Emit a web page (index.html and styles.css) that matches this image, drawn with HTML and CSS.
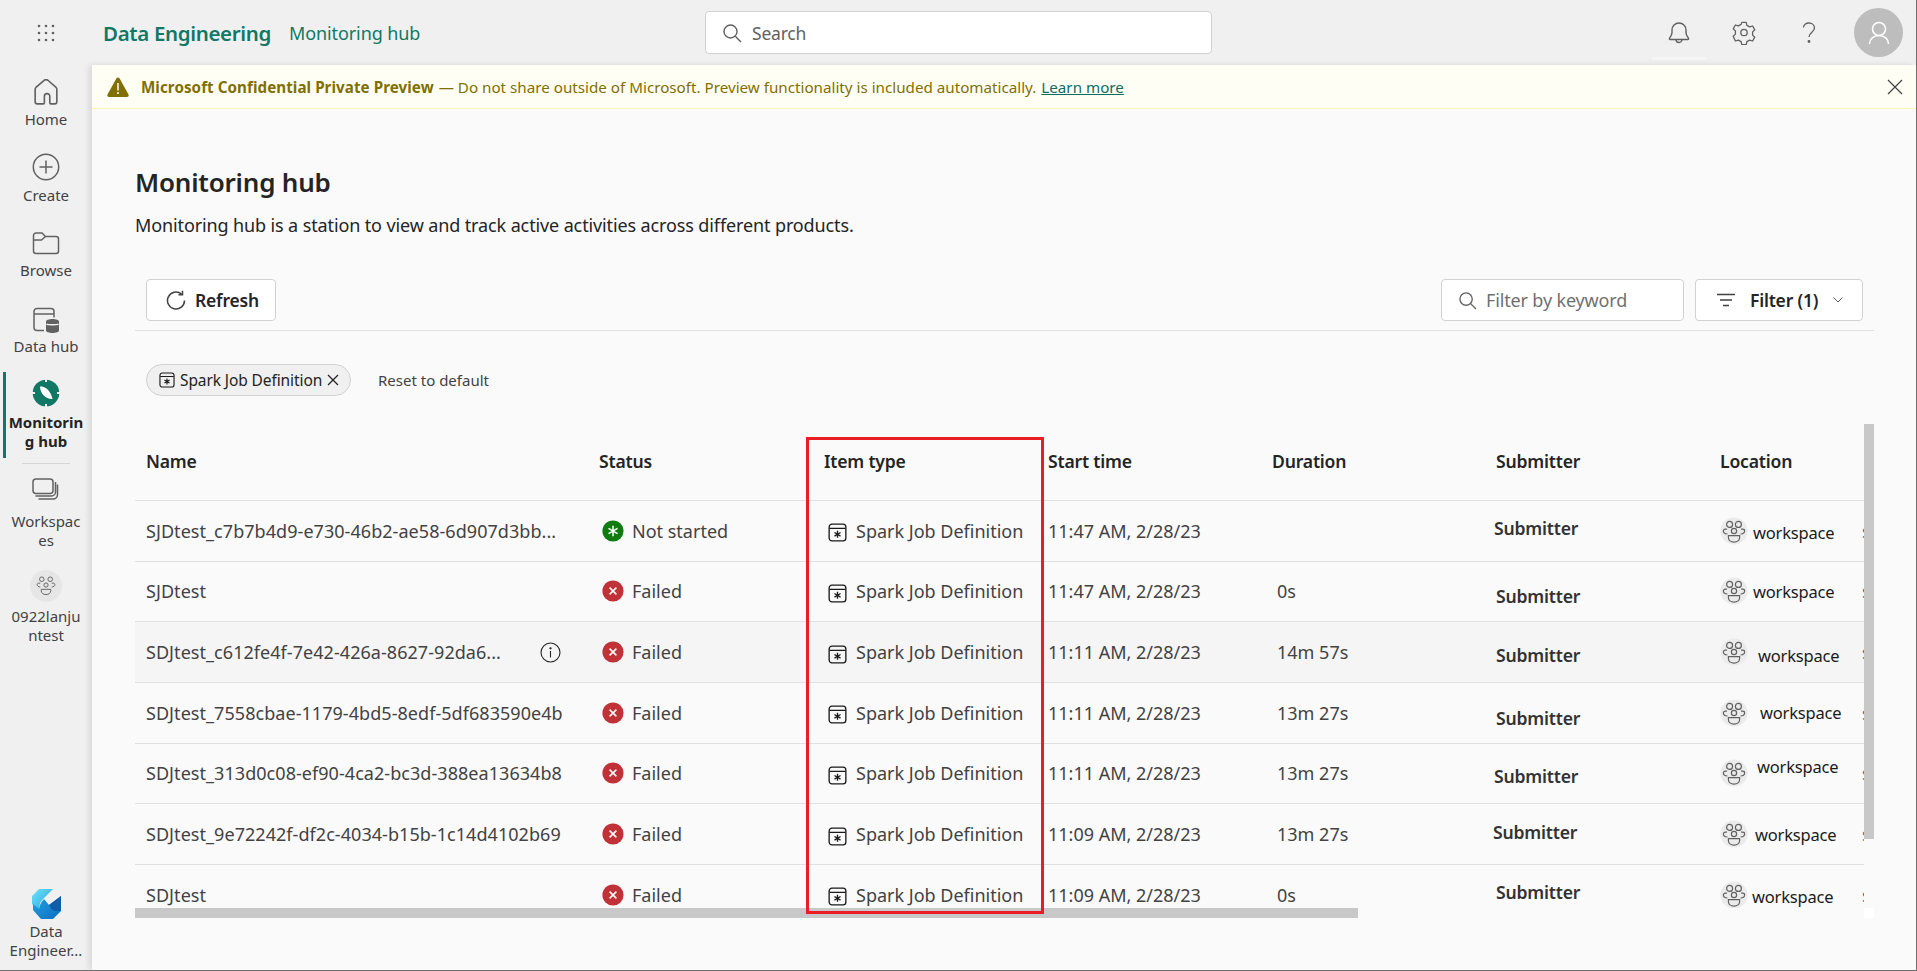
FILE: index.html
```html
<!DOCTYPE html>
<html lang="en">
<head>
<meta charset="utf-8">
<title>Monitoring hub</title>
<link rel="stylesheet" href="styles.css">
</head>
<body>
<svg class="defs" width="0" height="0" aria-hidden="true">
  <defs>
    <symbol id="sjd" viewBox="0 0 20 20"><rect x="1.2" y="1.2" width="17.6" height="17.6" rx="3" fill="none" stroke="#1a1a1a" stroke-width="1.4"/><path d="M1.5 5.6h17M10 8.2v7.4M6.8 10l6.4 3.8M13.2 10l-6.4 3.8" fill="none" stroke="#1a1a1a" stroke-width="1.4"/></symbol>
    <symbol id="fail" viewBox="0 0 22 22"><circle cx="11" cy="11" r="10.6" fill="#c13238"/><path d="M7.6 7.6l6.8 6.8M14.4 7.6l-6.8 6.8" stroke="#fff" stroke-width="1.5" fill="none"/></symbol>
    <symbol id="team" viewBox="0 0 28 28"><circle cx="14" cy="14" r="13.6" fill="#ebebeb"/><g fill="none" stroke="#616161" stroke-width="1.2"><circle cx="9.6" cy="7.4" r="3"/><circle cx="18.4" cy="7.4" r="3"/><circle cx="14" cy="14" r="2.6"/><path d="M7 12.2H5.4c-1.2 0-2 .8-2 1.8 0 1.5 1.6 2.8 4 3M21 12.2h1.6c1.2 0 2 .8 2 1.8 0 1.500-1.600 2.800-4 3M8.400 18.600h11.200v2c0 2.600-2.400 4.600-5.600 4.600s-5.600-2-5.600-4.600z"/></g></symbol>
  </defs>
</svg>
<header class="topbar">
  <div class="waffle">
    <svg width="18" height="18" viewBox="0 0 18 18" fill="#616161"><circle cx="2" cy="2" r="1.300"/><circle cx="9" cy="2" r="1.300"/><circle cx="16" cy="2" r="1.300"/><circle cx="2" cy="9" r="1.300"/><circle cx="9" cy="9" r="1.300"/><circle cx="16" cy="9" r="1.300"/><circle cx="2" cy="16" r="1.300"/><circle cx="9" cy="16" r="1.300"/><circle cx="16" cy="16" r="1.300"/></svg>
  </div>
  <div class="brand">Data Engineering</div>
  <div class="crumb">Monitoring hub</div>
  <div class="search">
    <svg width="20" height="20" viewBox="0 0 20 20" fill="none" stroke="#616161" stroke-width="1.400"><circle cx="8.500" cy="8.500" r="6.500"/><path d="M13.300 13.300l5.700 5.700"/></svg>
    <span>Search</span>
  </div>
  <div class="top-icons">
    <div class="top-icon bell">
      <svg width="22" height="24" viewBox="0 0 22 24" fill="none" stroke="#616161" stroke-width="1.400"><path d="M4 11.500V9a7 7 0 0 1 14 0v2.500c0 2.500 1.500 4.200 2.500 5.800.4.700 0 1.200-.7 1.200H2.200c-.7 0-1.100-.5-.7-1.200 1-1.600 2.500-3.300 2.500-5.800zM8 18.500a3 3 0 0 0 6 0"/></svg>
    </div>
    <div class="top-icon">
      <svg width="24" height="24" viewBox="0 0 24 24" fill="none" stroke="#616161" stroke-width="1.300"><path d="M9.800 1.400h4.400l.7 3 2.700 1.500 3-.9 2.200 3.800-2.200 2.100v3.200l2.200 2.100-2.200 3.800-3-.9-2.700 1.500-.7 3H9.800l-.7-3-2.700-1.500-3 .9L1.200 15.200l2.200-2.100V9.900L1.200 7.800 3.400 4l3 .9 2.700-1.500z" stroke-linejoin="round"/><circle cx="12" cy="11.500" r="3.200"/></svg>
    </div>
    <div class="top-icon">
      <svg width="14" height="22" viewBox="0 0 14 22" fill="none" stroke="#616161" stroke-width="1.300"><path d="M1.500 5.500C1.500 3 4 1 7 1s5.500 2 5.500 5c0 4-5.500 4.500-5.500 9"/><circle cx="7" cy="19.500" r=".8" fill="#616161"/></svg>
    </div>
  </div>
  <div class="me">
    <svg width="24" height="24" viewBox="0 0 24 24" fill="none" stroke="#fff" stroke-width="1.500"><circle cx="12" cy="8" r="6.500"/><path d="M2.500 23c0-5 4-8.500 9.500-8.500s9.500 3.500 9.500 8.500"/></svg>
  </div>
</header>
<div class="shell">
  <nav class="side">
    <a class="nav n-home">
      <svg width="24" height="26" viewBox="1 1 22 24" fill="none" stroke="#616161" stroke-width="1.500"><path d="M10 2.400a3 3 0 0 1 4 0l7.300 6.400c.5.500.7 1 .7 1.700V22a2 2 0 0 1-2 2h-3.500a1 1 0 0 1-1-1v-6a2.500 2.500 0 0 0-5 0v6a1 1 0 0 1-1 1H4a2 2 0 0 1-2-2V10.500c0-.7.200-1.200.7-1.700z"/></svg>
      <span>Home</span>
    </a>
    <a class="nav n-create">
      <svg width="28" height="28" viewBox="0 0 28 28" fill="none" stroke="#616161" stroke-width="1.500"><circle cx="14" cy="14" r="12.700"/><path d="M14 7.500v13M7.500 14h13"/></svg>
      <span>Create</span>
    </a>
    <a class="nav n-browse">
      <svg width="28" height="24" viewBox="0 0 28 24" fill="none" stroke="#616161" stroke-width="1.500"><path d="M1.500 4.500a2.500 2.500 0 0 1 2.500-2.500h6l3.500 3.500H24a2.500 2.500 0 0 1 2.500 2.500v12a2.500 2.500 0 0 1-2.500 2.500H4a2.500 2.500 0 0 1-2.500-2.500zM1.500 9h8l4-3.500"/></svg>
      <span>Browse</span>
    </a>
    <a class="nav n-data">
      <svg width="28" height="28" viewBox="0 0 28 28" fill="none" stroke="#616161" stroke-width="1.500"><path d="M12 24.500H5a3 3 0 0 1-3-3v-16a3 3 0 0 1 3-3h14a3 3 0 0 1 3 3v6M2 8h20"/><path d="M14 15.500c0-1.500 3-2.500 6.500-2.500s6.500 1 6.500 2.500v9c0 1.500-3 2.500-6.500 2.500s-6.500-1-6.500-2.500z" fill="#616161" stroke="none"/><path d="M14.500 18c1.500 1 10.500 1 12 0" stroke="#f0f0f0"/></svg>
      <span>Data hub</span>
    </a>
    <a class="nav active">
      <svg width="28" height="28" viewBox="0 0 28 28"><circle cx="14" cy="14" r="13.300" fill="#117865"/><path d="M8 7.500c5-1 11 4.500 12.500 12.500C14 20.500 8 14.500 8 7.500z" fill="#fff"/><path d="M13 0h2v3h-2zM13 25h2v3h-2zM0 13h3v2H0zM25 13h3v2h-3z" fill="#f0f0f0"/></svg>
      <span>Monitoring hub</span>
    </a>
    <div class="nav-sep"></div>
    <a class="nav spaces">
      <svg width="28" height="24" viewBox="0 0 28 24" fill="none" stroke="#616161" stroke-width="1.500"><rect x="1" y="1" width="20" height="14.500" rx="3"/><path d="M3.500 18h16a4 4 0 0 0 4-4V4M6.500 21h14.500a4.500 4.500 0 0 0 4.500-4.500V6.500" /></svg>
      <span>Workspaces</span>
    </a>
    <a class="nav ws">
      <div class="ws-badge"><svg width="20" height="20" viewBox="5 4 18 21"><g fill="none" stroke="#616161" stroke-width="1"><circle cx="9.600" cy="7.400" r="2.400"/><circle cx="18.400" cy="7.400" r="2.400"/><circle cx="14" cy="13.500" r="2.200"/><path d="M8 11.500H6.500c-1.200 0-1.800.8-1.800 1.600 0 1.300 1.400 2.400 3.300 2.500M20 11.500h1.500c1.200 0 1.800.8 1.800 1.600 0 1.300-1.400 2.400-3.300 2.500M9 18h10v1.500c0 2.500-2.200 4-5 4s-5-1.500-5-4z"/></g></svg></div>
      <span>0922lanjuntest</span>
    </a>
    <a class="nav logo">
      <svg width="29" height="30" viewBox="0 0 29 30"><defs><linearGradient id="lg1" x1="0" y1="0" x2="1" y2="1"><stop offset="0" stop-color="#6fe3f8"/><stop offset="1" stop-color="#1f9fe0"/></linearGradient><linearGradient id="lg2" x1="0" y1="0" x2="1" y2="1"><stop offset="0" stop-color="#22a5e6"/><stop offset="1" stop-color="#0f6cbd"/></linearGradient></defs><path d="M7 0h14L10 11Q6 16 8 22L0 15V7z" fill="url(#lg1)"/><path d="M12 10l5 6L29 7v15l-8 8H9l-8-9v-6l6 5q1-6 5-10z" fill="url(#lg2)"/><path d="M17 16L29 7v15h-7q-3-2-5-6z" fill="#0f5ea8"/></svg>
      <span>Data Engineer...</span>
    </a>
  </nav>
  <main class="main">
    <div class="banner">
      <svg class="warn" width="22" height="20" viewBox="0 0 22 20"><path d="M9.500 1.300a1.700 1.700 0 0 1 3 0l9 16.200c.6 1.100-.2 2.500-1.500 2.500H2c-1.300 0-2.100-1.400-1.500-2.500z" fill="#7f7000"/><path d="M11 6v7.500" stroke="#fffef5" stroke-width="1.500"/><circle cx="11" cy="16" r="1" fill="#fffef5"/></svg>
      <strong>Microsoft Confidential Private Preview</strong>
      <span class="b-text">— Do not share outside of Microsoft. Preview functionality is included automatically.</span>
      <a class="b-link">Learn more</a>
      <svg class="b-close" width="16" height="16" viewBox="0 0 16 16" stroke="#424242" stroke-width="1.200"><path d="M1 1l14 14M15 1L1 15"/></svg>
    </div>
    <section class="page">
      <h1>Monitoring hub</h1>
      <p class="lead">Monitoring hub is a station to view and track active activities across different products.</p>
      <div class="toolbar">
        <button class="btn refresh">
          <svg width="21" height="21" viewBox="0 0 21 21" fill="none" stroke="#424242" stroke-width="1.500"><path d="M18.500 10.500a8.500 8.500 0 1 1-3.200-6.600M16.500 .8v4h-4"/></svg>
          <span>Refresh</span>
        </button>
        <div class="kw">
          <svg width="19" height="19" viewBox="0 0 20 20" fill="none" stroke="#616161" stroke-width="1.400"><circle cx="8.500" cy="8.500" r="6.500"/><path d="M13.300 13.300l5.700 5.700"/></svg>
          <span>Filter by keyword</span>
        </div>
        <button class="btn filter">
          <svg width="20" height="14" viewBox="0 0 20 14" stroke="#424242" stroke-width="1.400"><path d="M1 1.500h18M4 7h12M7 12.500h6"/></svg>
          <span>Filter (1)</span>
          <svg class="chev" width="10" height="6" viewBox="0 0 10 6" fill="none" stroke="#616161" stroke-width="1"><path d="M.5.500L5 5 9.500.5"/></svg>
        </button>
      </div>
      <div class="chips">
        <div class="chip">
          <svg class="ic-chip"><use href="#sjd"/></svg>
          <span>Spark Job Definition</span>
          <svg width="12" height="12" viewBox="0 0 12 12" stroke="#242424" stroke-width="1.300"><path d="M1 1l10 10M11 1L1 11"/></svg>
        </div>
        <a class="reset">Reset to default</a>
      </div>
      <div class="table-wrap">
        <div class="table">
          <div class="row head">
            <div>Name</div><div>Status</div><div>Item type</div><div>Start time</div><div>Duration</div><div>Submitter</div><div>Location</div>
          </div>
          <div class="row">
            <div class="name">SJDtest_c7b7b4d9-e730-46b2-ae58-6d907d3bb...</div>
            <div class="status"><svg class="ic-st" viewBox="0 0 22 22"><circle cx="11" cy="11" r="10.600" fill="#107c10"/><path d="M11 5.800v10.400M6.500 8.400l9 5.200M15.500 8.400l-9 5.200" stroke="#fff" stroke-width="1.500"/></svg><span>Not started</span></div>
            <div class="item"><svg class="ic-item n2"><use href="#sjd"/></svg><span>Spark Job Definition</span></div>
            <div>11:47 AM, 2/28/23</div>
            <div class="dur"></div>
            <div class="sub l-2 n-3">Submitter</div>
            <div class="loc"><svg class="ic-ws"><use href="#team"/></svg><span class="w-a t2">workspace</span></div>
          </div>
          <div class="row">
            <div class="name">SJDtest</div>
            <div class="status"><svg class="ic-st"><use href="#fail"/></svg><span>Failed</span></div>
            <div class="item"><svg class="ic-item n2"><use href="#sjd"/></svg><span>Spark Job Definition</span></div>
            <div>11:47 AM, 2/28/23</div>
            <div class="dur">0s</div>
            <div class="sub n5">Submitter</div>
            <div class="loc"><svg class="ic-ws"><use href="#team"/></svg><span class="w-a">workspace</span></div>
          </div>
          <div class="row hover">
            <div class="name split"><span>SDJtest_c612fe4f-7e42-426a-8627-92da6...</span><svg class="info" width="21" height="21" viewBox="0 0 21 21" fill="none" stroke="#242424" stroke-width="1.100"><circle cx="10.500" cy="10.500" r="9.500"/><path d="M10.500 9v6.500"/><circle cx="10.500" cy="6.300" r=".6" fill="#242424"/></svg></div>
            <div class="status"><svg class="ic-st"><use href="#fail"/></svg><span>Failed</span></div>
            <div class="item"><svg class="ic-item n2"><use href="#sjd"/></svg><span>Spark Job Definition</span></div>
            <div>11:11 AM, 2/28/23</div>
            <div class="dur">14m 57s</div>
            <div class="sub n3">Submitter</div>
            <div class="loc"><svg class="ic-ws"><use href="#team"/></svg><span class="w-b t3">workspace</span></div>
          </div>
          <div class="row">
            <div class="name">SDJtest_7558cbae-1179-4bd5-8edf-5df683590e4b</div>
            <div class="status"><svg class="ic-st"><use href="#fail"/></svg><span>Failed</span></div>
            <div class="item"><svg class="ic-item n2"><use href="#sjd"/></svg><span>Spark Job Definition</span></div>
            <div>11:11 AM, 2/28/23</div>
            <div class="dur">13m 27s</div>
            <div class="sub n5">Submitter</div>
            <div class="loc"><svg class="ic-ws"><use href="#team"/></svg><span class="w-c">workspace</span></div>
          </div>
          <div class="row">
            <div class="name">SDJtest_313d0c08-ef90-4ca2-bc3d-388ea13634b8</div>
            <div class="status"><svg class="ic-st"><use href="#fail"/></svg><span>Failed</span></div>
            <div class="item"><svg class="ic-item n2"><use href="#sjd"/></svg><span>Spark Job Definition</span></div>
            <div>11:11 AM, 2/28/23</div>
            <div class="dur">13m 27s</div>
            <div class="sub l-2 n3">Submitter</div>
            <div class="loc"><svg class="ic-ws"><use href="#team"/></svg><span class="w-d t-7">workspace</span></div>
          </div>
          <div class="row">
            <div class="name">SDJtest_9e72242f-df2c-4034-b15b-1c14d4102b69</div>
            <div class="status"><svg class="ic-st"><use href="#fail"/></svg><span>Failed</span></div>
            <div class="item"><svg class="ic-item n2"><use href="#sjd"/></svg><span>Spark Job Definition</span></div>
            <div>11:09 AM, 2/28/23</div>
            <div class="dur">13m 27s</div>
            <div class="sub l-3 n-3">Submitter</div>
            <div class="loc"><svg class="ic-ws"><use href="#team"/></svg><span class="w-e">workspace</span></div>
          </div>
          <div class="row">
            <div class="name">SDJtest</div>
            <div class="status"><svg class="ic-st"><use href="#fail"/></svg><span>Failed</span></div>
            <div class="item"><svg class="ic-item n2"><use href="#sjd"/></svg><span>Spark Job Definition</span></div>
            <div>11:09 AM, 2/28/23</div>
            <div class="dur">0s</div>
            <div class="sub n-3">Submitter</div>
            <div class="loc"><svg class="ic-ws"><use href="#team"/></svg><span class="w-f t2">workspace</span></div>
          </div>
        </div>
        <div class="vbar"></div>
        <div class="hbar"></div>
        <div class="corner"></div>
      </div>
      <div class="redbox"></div>
    </section>
  </main>
</div>
</body>
</html>
```
FILE: styles.css
```css
* { box-sizing: border-box; }
html, body { margin: 0; height: 100%; }
body {
  width: 1917px; height: 971px; overflow: hidden;
  background: #f0f0f0; color: #242424;
  font-family: "Noto Sans", "Open Sans", "Liberation Sans", sans-serif;
  border-right: 1px solid #6e6e6e; border-bottom: 1px solid #6e6e6e;
  display: flex; flex-direction: column;
}
.defs { display: block; height: 0; }
svg { flex: none; display: block; }

.topbar { height: 65px; flex: none; display: flex; align-items: center; position: relative; }
.waffle { width: 103px; padding-left: 37px; }
.brand { font-size: 20.500px; font-weight: 600; color: #117865; letter-spacing: -.35px; width: 186px; }
.crumb { font-size: 18px; color: #117865; letter-spacing: -.1px; width: 416px; }
.search { width: 507px; height: 43px; background: #fff; border: 1px solid #d1d1d1; border-radius: 4px; display: flex; align-items: center; padding-left: 16px; gap: 10px; font-size: 17.500px; color: #616161; letter-spacing: -.2px; }
.top-icons { display: flex; margin-left: 434px; }
.top-icon { width: 65px; height: 54px; display: flex; align-items: center; justify-content: center; margin-top: 0; }
.bell { border-bottom: 3px solid #f5f5f5; width: 54px; margin-right: 5px; margin-left: 6px; height: 54px; padding-top: 3px; }
.me { width: 49px; height: 49px; border-radius: 50%; background: #bdbdbd; display: flex; align-items: center; justify-content: center; margin-left: 13px; }

.shell { flex: 1; display: flex; min-height: 0; }
.side { width: 92px; flex: none; display: flex; flex-direction: column; align-items: center; position: relative; padding-top: 13px; }
.nav { width: 74px; flex: none; display: flex; flex-direction: column; align-items: center; text-align: center; font-size: 15px; line-height: 19px; color: #424242; word-break: break-all; }
.nav span { display: block; }
.n-home { height: 75px; padding-top: 1px; gap: 5px; }
.n-create { height: 78px; gap: 4.500px; }
.n-browse { height: 75px; gap: 6px; }
.n-data { height: 66px; gap: 2.500px; }
.nav.active { height: 86px; width: 86px; align-self: flex-start; margin-left: 3px; padding: 7px 3px 0; font-weight: 700; color: #242424; position: relative; gap: 5.500px; }
.nav.active::before { content: ""; position: absolute; left: 0; top: 0; bottom: 0; width: 3px; background: #117865; }
.nav-sep { width: 48px; height: 1px; background: #d6d6d6; flex: none; margin-top: 5px; }
.nav.spaces { height: 106px; padding-top: 14px; gap: 9.500px; }
.nav.ws { gap: 4.500px; }
.ws-badge { width: 32px; height: 32px; border-radius: 50%; background: #e6e6e6; display: flex; align-items: center; justify-content: center; }
.nav.logo { margin-top: auto; padding-bottom: 10px; gap: 3.500px; word-break: normal; }

.main { flex: 1; min-width: 0; background: #fafafa; box-shadow: -3px 0 6px rgba(0,0,0,.10); display: flex; flex-direction: column; }
.banner { height: 44px; flex: none; background: #fffef5; border-bottom: 1px solid #fff4b0; display: flex; align-items: center; padding-left: 15px; font-size: 15.200px; color: #7f7000; }
.banner strong { margin-left: 12px; font-weight: 700; letter-spacing: .05px; }
.b-text { margin-left: 5px; }
.b-link { margin-left: 5px; text-decoration: underline; color: #0f6c5e; }
.b-close { margin-left: auto; margin-right: 13px; }

.page { flex: 1; padding: 0 42px 0 43px; position: relative; min-height: 0; }
h1 { margin: 55px 0 0; font-size: 26px; line-height: 36px; font-weight: 600; letter-spacing: -.2px; }
.lead { margin: 12px 0 0; font-size: 18px; line-height: 26px; letter-spacing: -.12px; }
.toolbar { margin-top: 41px; height: 52px; border-bottom: 1px solid #e0e0e0; display: flex; align-items: flex-start; padding: 0 11px 0 11px; }
.btn { font: inherit; height: 42px; background: #fff; border: 1px solid #d1d1d1; border-radius: 4px; display: flex; align-items: center; font-size: 17.500px; font-weight: 600; color: #242424; letter-spacing: -.2px; padding: 0; }
.refresh { width: 130px; padding-left: 19px; gap: 8px; }
.kw { margin-left: auto; width: 243px; height: 42px; background: #fff; border: 1px solid #d1d1d1; border-radius: 4px; display: flex; align-items: center; padding-left: 16px; gap: 9px; font-size: 18px; color: #707070; letter-spacing: -.15px; }
.filter { margin-left: 11px; width: 168px; padding-left: 20px; }
.filter span { margin-left: 14px; }
.chev { margin-left: 15px; }
.chips { margin-top: 32px; padding-left: 11px; display: flex; align-items: center; height: 33px; }
.chip { width: 205px; height: 32px; border: 1px solid #d1d1d1; background: #f0f0f0; border-radius: 16px; display: flex; align-items: center; padding-left: 12px; gap: 5px; font-size: 15.500px; letter-spacing: -.1px; }
.ic-chip { width: 16px; height: 16px; }
.reset { margin-left: 27px; font-size: 15px; color: #424242; }

.table-wrap { margin-top: 28px; height: 494px; width: 1739px; position: relative; overflow: hidden; }
.table { width: 1729px; height: 484px; overflow: hidden; }
.row { display: grid; grid-template-columns: 453px 225px 224px 224px 224px 224px 153px 2px; height: 60.670px; border-bottom: 1px solid #e0e0e0; align-items: center; font-size: 18px; color: #424242; overflow: hidden; }
.row > div { padding-left: 11px; white-space: nowrap; }
.row:not(.head)::after { content: "s"; color: #616161; }
.row.head { height: 77px; font-weight: 600; color: #242424; padding-bottom: 3px; font-size: 17.600px; letter-spacing: -.2px; }
.row.hover { background: #f5f5f5; }
.name { letter-spacing: .05px; }
.split { display: flex; align-items: center; justify-content: space-between; padding-right: 27px; }
.status { display: flex; align-items: center; gap: 8px; padding-left: 14px !important; }
.ic-st { width: 22px; height: 22px; }
.item { display: flex; align-items: center; gap: 9px; padding-left: 15px !important; }
.ic-item { width: 19px; height: 19px; }
.n2 { position: relative; top: 2px; }
.dur { padding-left: 16px !important; }
.sub { font-weight: 600; color: #323232; font-size: 17.600px; letter-spacing: -.2px; }
.l-2 { padding-left: 9px !important; }
.l-3 { padding-left: 8px !important; }
.n5 { margin-top: 10px; }
.n3 { margin-top: 6px; }
.n-3 { margin-top: -5px; }
.loc { display: flex; align-items: center; color: #1a1a1a; font-size: 16.500px; letter-spacing: -.2px; }
.ic-ws { width: 28px; height: 28px; }
.w-a { margin-left: 5px; }
.w-b { margin-left: 10px; }
.w-c { margin-left: 12px; }
.w-d { margin-left: 9px; }
.w-e { margin-left: 7px; }
.w-f { margin-left: 4px; }
.t2 { margin-top: 4px; }
.t3 { margin-top: 6px; }
.t-7 { margin-top: -14px; }
.vbar { position: absolute; right: 0; top: 0; width: 10px; height: 415px; background: #c8c8c8; }
.hbar { position: absolute; left: 0; bottom: 0; width: 1223px; height: 10px; background: #c8c8c8; }
.corner { position: absolute; right: 0; bottom: 0; width: 10px; height: 10px; background: #fff; }
.redbox { position: absolute; left: 714px; top: 328px; width: 238px; height: 477px; border: 3px solid #ea1c24; pointer-events: none; }
```
